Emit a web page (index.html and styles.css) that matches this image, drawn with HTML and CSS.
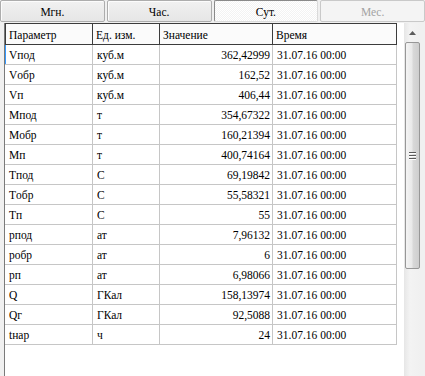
FILE: index.html
```html
<!DOCTYPE html>
<html>
<head>
<meta charset="utf-8">
<link rel="stylesheet" href="styles.css">
</head>
<body>
<div class="tabs">
  <div class="tab">Мгн.</div>
  <div class="tab">Час.</div>
  <div class="tab active">Сут.</div>
  <div class="tab disabled">Мес.</div>
</div>
<div class="grid">
  <div class="view">
    <div class="row head"><div class="cell">Параметр</div><div class="cell">Ед. изм.</div><div class="cell">Значение</div><div class="cell">Время</div></div>
    <div class="row focus"><div class="cell">Vпод</div><div class="cell">куб.м</div><div class="cell num">362,42999</div><div class="cell">31.07.16 00:00</div></div>
    <div class="row"><div class="cell">Vобр</div><div class="cell">куб.м</div><div class="cell num">162,52</div><div class="cell">31.07.16 00:00</div></div>
    <div class="row"><div class="cell">Vп</div><div class="cell">куб.м</div><div class="cell num">406,44</div><div class="cell">31.07.16 00:00</div></div>
    <div class="row"><div class="cell">Mпод</div><div class="cell">т</div><div class="cell num">354,67322</div><div class="cell">31.07.16 00:00</div></div>
    <div class="row"><div class="cell">Mобр</div><div class="cell">т</div><div class="cell num">160,21394</div><div class="cell">31.07.16 00:00</div></div>
    <div class="row"><div class="cell">Mп</div><div class="cell">т</div><div class="cell num">400,74164</div><div class="cell">31.07.16 00:00</div></div>
    <div class="row"><div class="cell">Tпод</div><div class="cell">C</div><div class="cell num">69,19842</div><div class="cell">31.07.16 00:00</div></div>
    <div class="row"><div class="cell">Tобр</div><div class="cell">C</div><div class="cell num">55,58321</div><div class="cell">31.07.16 00:00</div></div>
    <div class="row"><div class="cell">Tп</div><div class="cell">C</div><div class="cell num">55</div><div class="cell">31.07.16 00:00</div></div>
    <div class="row"><div class="cell">pпод</div><div class="cell">ат</div><div class="cell num">7,96132</div><div class="cell">31.07.16 00:00</div></div>
    <div class="row"><div class="cell">pобр</div><div class="cell">ат</div><div class="cell num">6</div><div class="cell">31.07.16 00:00</div></div>
    <div class="row"><div class="cell">pп</div><div class="cell">ат</div><div class="cell num">6,98066</div><div class="cell">31.07.16 00:00</div></div>
    <div class="row"><div class="cell">Q</div><div class="cell">ГКал</div><div class="cell num">158,13974</div><div class="cell">31.07.16 00:00</div></div>
    <div class="row"><div class="cell">Qг</div><div class="cell">ГКал</div><div class="cell num">92,5088</div><div class="cell">31.07.16 00:00</div></div>
    <div class="row"><div class="cell">tнар</div><div class="cell">ч</div><div class="cell num">24</div><div class="cell">31.07.16 00:00</div></div>
  </div>
  <div class="scrollbar">
    <div class="arrow"><svg width="7" height="4" viewBox="0 0 7 4"><path d="M0 4 L3.5 0 L7 4 Z" fill="#5c5c5c"/></svg></div>
    <div class="thumb"><div class="grip"><i></i><i></i><i></i></div></div>
  </div>
</div>
</body>
</html>
```
FILE: styles.css
```css
html, body {
  margin: 0;
  padding: 0;
  background: #f0f0f0;
  color: #000;
  overflow: hidden;
  height: 376px;
  font-family: "Liberation Serif", "Times New Roman", serif;
  font-size: 11.5px;
}
.tabs {
  display: flex;
  gap: 2px;
  height: 22px;
  box-sizing: border-box;
}
.tab {
  flex: 1;
  box-sizing: border-box;
  border: 1px solid #adadad;
  border-radius: 2px;
  background: linear-gradient(#f1f1f1, #e6e6e6);
  box-shadow: inset 1px 1px 0 #fcfcfc;
  display: flex;
  align-items: center;
  justify-content: center;
  padding-top: 1px;
}
.tab.active {
  background-color: #fff;
  background-image: repeating-conic-gradient(#f3f3f3 0 25%, #ffffff 0 50%);
  background-size: 2px 2px;
  border-color: #8a8a8a #dadada #dadada #8a8a8a;
  box-shadow: none;
}
.tab.disabled {
  color: #a3a3a3;
  border-color: #c9c9c9;
  background: #f4f4f4;
  box-shadow: none;
}
.grid {
  display: flex;
  margin: 1px 4px 0 4px;
  height: 353px;
  background: #fff;
  border-left: 1px solid #7a7a7a;
}
.view {
  flex: 1;
}
.row {
  display: grid;
  grid-template-columns: 88px 67px 113px 124px;
  height: 20px;
}
.cell {
  box-sizing: border-box;
  height: 20px;
  padding: 0 3px 0 4px;
  border-right: 1px solid #c6c6c6;
  border-bottom: 1px solid #c6c6c6;
  white-space: nowrap;
  overflow: hidden;
  display: flex;
  align-items: center;
}
.cell.num {
  justify-content: flex-end;
  padding-right: 2px;
}
.row.head {
  height: 22px;
}
.row.head .cell {
  height: 22px;
  background: #fbfbfb;
  border-top: 1px solid #3c3c3c;
  border-right: 1px solid #3c3c3c;
  border-bottom: 1px solid #3c3c3c;
  padding-left: 3px;
  padding-top: 1px;
}
.row.head .cell:first-child {
  border-left: 1px solid #3c3c3c;
  padding-left: 3px;
}
.row.focus .cell:first-child {
  box-shadow: inset 1px 0 0 #3399ff;
}
.scrollbar {
  width: 17px;
  background: linear-gradient(90deg, #e6e6e6, #f3f3f3 35%, #f0f0f0);
  display: flex;
  flex-direction: column;
  align-items: center;
}
.arrow {
  height: 19px;
  display: flex;
  align-items: center;
  justify-content: center;
}
.thumb {
  width: 15px;
  height: 227px;
  box-sizing: border-box;
  border: 1px solid #979797;
  border-radius: 2px;
  background: linear-gradient(90deg, #f4f4f4, #e9e9e9 45%, #d8d8d8 55%, #cecece);
  display: flex;
  align-items: center;
  justify-content: center;
}
.grip {
  display: flex;
  flex-direction: column;
  gap: 1px;
}
.grip i {
  display: block;
  width: 7px;
  height: 1px;
  background: #5a5a5a;
  border-bottom: 1px solid #fff;
}
```
